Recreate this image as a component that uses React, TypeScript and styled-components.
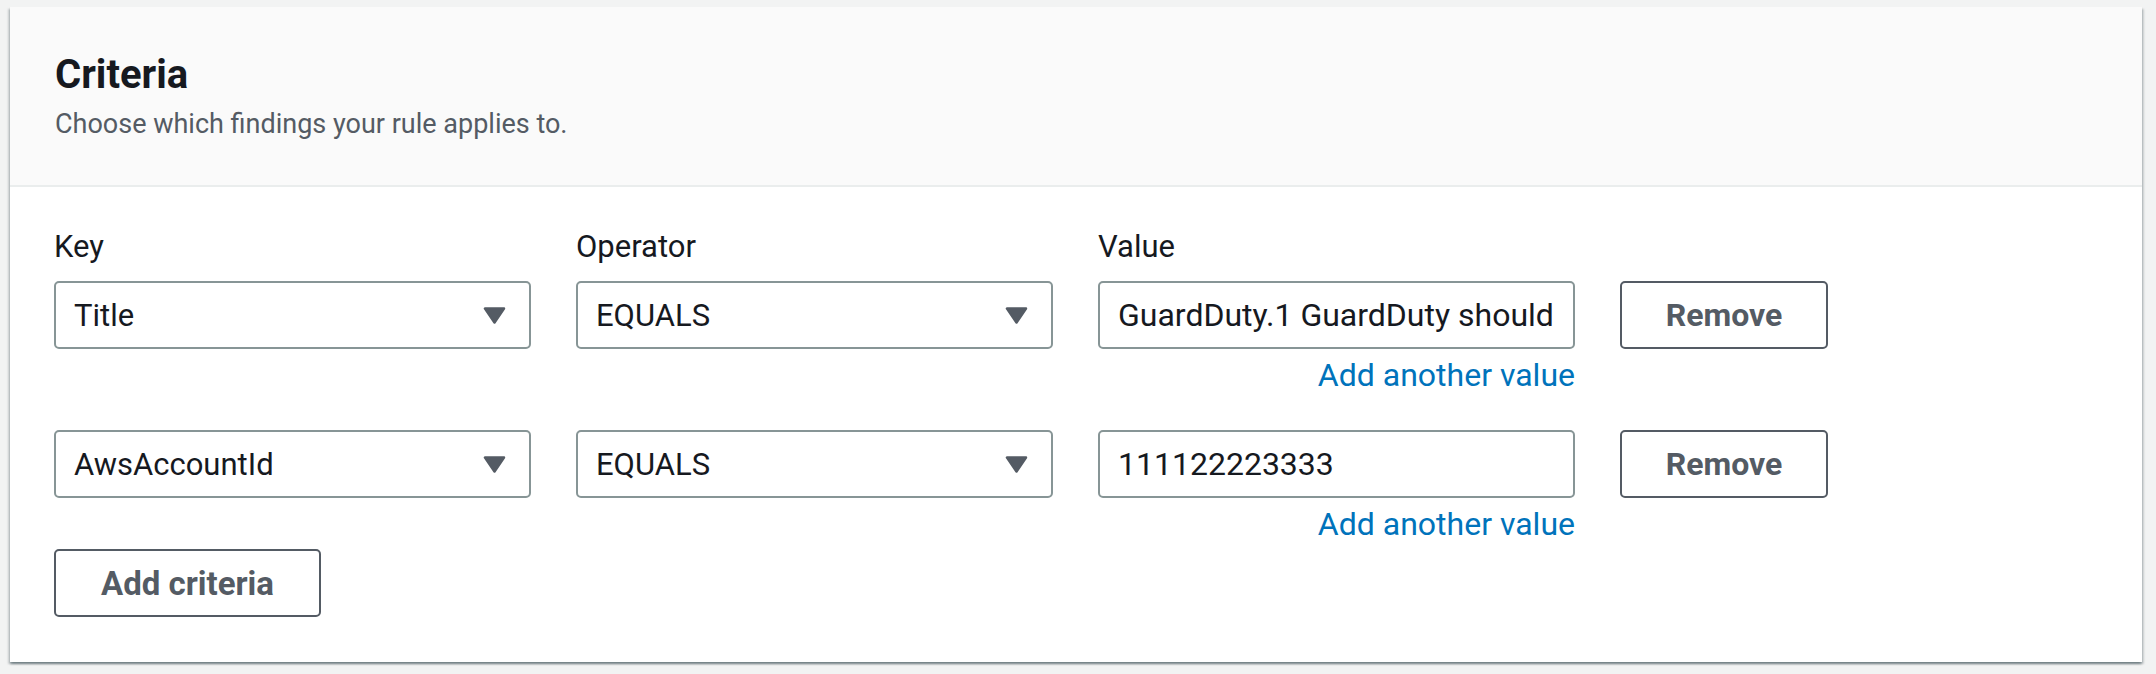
import React from "react";
import styled, { createGlobalStyle } from "styled-components";

const GlobalStyle = createGlobalStyle`
  html, body {
    margin: 0;
    padding: 0;
    background: #f2f3f3;
    font-family: Roboto, "Liberation Sans", Arial, sans-serif;
    color: #16191f;
  }
  * { box-sizing: border-box; }
`;

const Page = styled.div`
  width: 2156px;
  height: 674px;
  padding: 7px 14px 12px 10px;
  background: #f2f3f3;
`;

const Card = styled.section`
  background: #ffffff;
  box-shadow: 0 2px 2px 0 rgba(0, 28, 36, 0.35), 2px 2px 2px 0 rgba(0, 28, 36, 0.15),
    -2px 2px 2px 0 rgba(0, 28, 36, 0.15);
`;

const Header = styled.header`
  background: #fafafa;
  padding: 44px 44px 43px 45px;
  border-bottom: 2px solid #eaeded;
`;

const Title = styled.h2`
  margin: 0;
  font-size: 40px;
  line-height: 48px;
  font-weight: 700;
  color: #16191f;
`;

const Description = styled.p`
  margin: 7px 0 0;
  font-size: 27px;
  line-height: 36px;
  color: #545b64;
`;

const Body = styled.div`
  padding: 42px 44px 45px 44px;
`;

const Grid = styled.div`
  display: grid;
  grid-template-columns: 477px 477px 477px 208px;
  column-gap: 45px;
  align-items: start;
`;

const LabelRow = styled(Grid)`
  margin-bottom: 16px;
`;

const CriterionRow = styled(Grid)<{ $last?: boolean }>`
  margin-bottom: ${(p) => (p.$last ? "9px" : "39px")};
`;

const Label = styled.div`
  font-size: 31px;
  line-height: 36px;
  color: #16191f;
`;

const Field = styled.div`
  display: flex;
  flex-direction: column;
  align-items: flex-end;
`;

const SelectBox = styled.div`
  height: 68px;
  display: flex;
  align-items: center;
  justify-content: space-between;
  padding: 0 23px 0 18px;
  border: 2px solid #879596;
  border-radius: 5px;
  background: #ffffff;
  font-size: 31px;
  color: #16191f;
  cursor: pointer;
`;

const TextInput = styled.input`
  width: 100%;
  height: 68px;
  padding: 0 18px;
  border: 2px solid #879596;
  border-radius: 5px;
  background: #ffffff;
  font-family: Roboto, "Liberation Sans", Arial, sans-serif;
  font-size: 32px;
  color: #16191f;
  outline: none;
`;

const Link = styled.a`
  margin-top: 10px;
  font-size: 32px;
  line-height: 32px;
  color: #0073bb;
  text-decoration: none;
  cursor: pointer;
`;

const Button = styled.button<{ $width: number }>`
  width: ${(p) => p.$width}px;
  height: 68px;
  border: 2px solid #545b64;
  border-radius: 5px;
  background: #ffffff;
  font-family: Roboto, "Liberation Sans", Arial, sans-serif;
  font-size: 32px;
  font-weight: 700;
  color: #545b64;
  cursor: pointer;
  padding: 0;
`;

const WideButton = styled(Button)`
  font-size: 33px;
`;

const Caret = () => (
  <svg width="23" height="17" viewBox="0 0 23 17" aria-hidden="true">
    <path
      d="M2 1.5 H21 L11.5 15.5 Z"
      fill="#545b64"
      stroke="#545b64"
      strokeWidth="2.5"
      strokeLinejoin="round"
    />
  </svg>
);

const Select = ({ value }: { value: string }) => (
  <SelectBox role="button">
    <span>{value}</span>
    <Caret />
  </SelectBox>
);

const criteria = [
  { key: "Title", operator: "EQUALS", value: "GuardDuty.1 GuardDuty should" },
  { key: "AwsAccountId", operator: "EQUALS", value: "111122223333" },
];

export default function App() {
  return (
    <>
      <GlobalStyle />
      <Page>
        <Card>
          <Header>
            <Title>Criteria</Title>
            <Description>Choose which findings your rule applies to.</Description>
          </Header>
          <Body>
            <LabelRow>
              <Label>Key</Label>
              <Label>Operator</Label>
              <Label>Value</Label>
            </LabelRow>
            {criteria.map((c, i) => (
              <CriterionRow key={i} $last={i === criteria.length - 1}>
                <Select value={c.key} />
                <Select value={c.operator} />
                <Field>
                  <TextInput readOnly value={c.value} />
                  <Link>Add another value</Link>
                </Field>
                <Button $width={208}>Remove</Button>
              </CriterionRow>
            ))}
            <WideButton $width={267}>Add criteria</WideButton>
          </Body>
        </Card>
      </Page>
    </>
  );
}
